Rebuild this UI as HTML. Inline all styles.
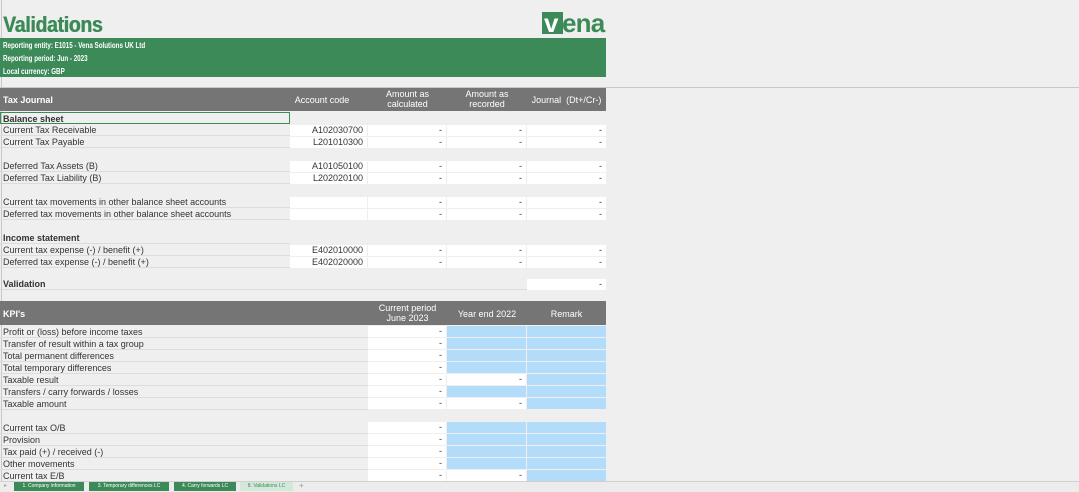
<!DOCTYPE html>
<html><head><meta charset="utf-8"><style>
*{margin:0;padding:0;box-sizing:border-box}
body{width:1079px;height:492px;background:#efefef;position:relative;overflow:hidden;font-family:"Liberation Sans",Arial,sans-serif;font-size:9px;color:#333}
.a{position:absolute}
.lbl{position:absolute;left:0;width:290px;height:12px;line-height:12px;padding-left:3px;border-bottom:1px solid #dcdcdc;white-space:nowrap}
.c{position:absolute;height:11px;background:#fff;line-height:11px;text-align:right;padding-right:4px;white-space:nowrap}
.b{background:#b3dcfb}
.hd{position:absolute;left:0;width:606px;background:#757575;color:#fff}
.hd div{position:absolute;text-align:center;line-height:10px}
.tab{position:absolute;top:482px;height:9px;background:#3c8a58;color:#fff;font-size:5px;line-height:9px;text-align:center;white-space:nowrap;overflow:hidden}
</style></head><body>
<div class="a" style="left:1px;top:0;width:1px;height:482px;background:#c8c8c8"></div>
<div class="a" style="left:3px;top:12px;font-size:22px;font-weight:bold;color:#3c8a58;letter-spacing:-0.3px;transform:scaleX(0.88);transform-origin:left;text-shadow:0.6px 0 0 #3c8a58">Validations</div>
<div class="a" style="left:542px;top:12px;width:21px;height:22px;background:#3c8a58"></div>
<div class="a" style="left:544px;top:10px;font-size:26px;font-weight:bold;color:#fff;line-height:26px">v</div>
<div class="a" style="left:562px;top:10px;font-size:26px;font-weight:bold;color:#3c8a58;line-height:26px;letter-spacing:-0.8px">ena</div>
<div class="a" style="left:0;top:38px;width:606px;height:39px;background:#3c8a58;color:#fff;font-size:8px;font-weight:bold;padding-left:3px;line-height:13px;padding-top:1px">
<div style="transform:scaleX(0.78);transform-origin:left">Reporting entity: E1015 - Vena Solutions UK Ltd</div>
<div style="transform:scaleX(0.78);transform-origin:left">Reporting period: Jun - 2023</div>
<div style="transform:scaleX(0.78);transform-origin:left">Local currency: GBP</div></div>
<div class="a" style="left:0;top:87px;width:1079px;height:1px;background:#c8c8c8"></div>
<div class="hd" style="top:88px;height:23px">
<div style="left:3px;top:7px;font-weight:bold;text-align:left">Tax Journal</div>
<div style="left:290px;width:64px;top:7px">Account code</div>
<div style="left:368px;width:79px;top:1px">Amount as<br>calculated</div>
<div style="left:447px;width:80px;top:1px">Amount as<br>recorded</div>
<div style="left:527px;width:79px;top:7px">Journal &nbsp;(Dt+/Cr-)</div>
</div>
<div class="lbl" style="top:112px;font-weight:bold;border:1px solid #3c8a58;padding-left:2px">Balance sheet</div>
<div class="lbl" style="top:124px">Current Tax Receivable</div>
<div class="lbl" style="top:136px">Current Tax Payable</div>
<div class="lbl" style="top:160px">Deferred Tax Assets (B)</div>
<div class="lbl" style="top:172px">Deferred Tax Liability (B)</div>
<div class="lbl" style="top:196px">Current tax movements in other balance sheet accounts</div>
<div class="lbl" style="top:208px">Deferred tax movements in other balance sheet accounts</div>
<div class="lbl" style="top:232px;font-weight:bold">Income statement</div>
<div class="lbl" style="top:244px">Current tax expense (-) / benefit (+)</div>
<div class="lbl" style="top:256px">Deferred tax expense (-) / benefit (+)</div>
<div class="lbl" style="top:278px;font-weight:bold;width:527px">Validation</div>

<div class="c" style="left:290px;width:77px;top:125px">A102030700</div><div class="c" style="left:368px;width:78px;top:125px">-</div><div class="c" style="left:447px;width:79px;top:125px">-</div><div class="c" style="left:527px;width:79px;top:125px">-</div>
<div class="c" style="left:290px;width:77px;top:137px">L201010300</div><div class="c" style="left:368px;width:78px;top:137px">-</div><div class="c" style="left:447px;width:79px;top:137px">-</div><div class="c" style="left:527px;width:79px;top:137px">-</div>
<div class="c" style="left:290px;width:77px;top:161px">A101050100</div><div class="c" style="left:368px;width:78px;top:161px">-</div><div class="c" style="left:447px;width:79px;top:161px">-</div><div class="c" style="left:527px;width:79px;top:161px">-</div>
<div class="c" style="left:290px;width:77px;top:173px">L202020100</div><div class="c" style="left:368px;width:78px;top:173px">-</div><div class="c" style="left:447px;width:79px;top:173px">-</div><div class="c" style="left:527px;width:79px;top:173px">-</div>
<div class="c" style="left:290px;width:77px;top:197px"></div><div class="c" style="left:368px;width:78px;top:197px">-</div><div class="c" style="left:447px;width:79px;top:197px">-</div><div class="c" style="left:527px;width:79px;top:197px">-</div>
<div class="c" style="left:290px;width:77px;top:209px"></div><div class="c" style="left:368px;width:78px;top:209px">-</div><div class="c" style="left:447px;width:79px;top:209px">-</div><div class="c" style="left:527px;width:79px;top:209px">-</div>
<div class="c" style="left:290px;width:77px;top:245px">E402010000</div><div class="c" style="left:368px;width:78px;top:245px">-</div><div class="c" style="left:447px;width:79px;top:245px">-</div><div class="c" style="left:527px;width:79px;top:245px">-</div>
<div class="c" style="left:290px;width:77px;top:257px">E402020000</div><div class="c" style="left:368px;width:78px;top:257px">-</div><div class="c" style="left:447px;width:79px;top:257px">-</div><div class="c" style="left:527px;width:79px;top:257px">-</div>
<div class="c" style="left:527px;width:79px;top:279px">-</div>

<div class="hd" style="top:301px;height:24px">
<div style="left:3px;top:8px;font-weight:bold;text-align:left">KPI's</div>
<div style="left:368px;width:79px;top:2px">Current period<br>June 2023</div>
<div style="left:447px;width:80px;top:8px">Year end 2022</div>
<div style="left:527px;width:79px;top:8px">Remark</div>
</div>
<div class="lbl" style="top:326px;width:368px">Profit or (loss) before income taxes</div>
<div class="lbl" style="top:338px;width:368px">Transfer of result within a tax group</div>
<div class="lbl" style="top:350px;width:368px">Total permanent differences</div>
<div class="lbl" style="top:362px;width:368px">Total temporary differences</div>
<div class="lbl" style="top:374px;width:368px">Taxable result</div>
<div class="lbl" style="top:386px;width:368px">Transfers / carry forwards / losses</div>
<div class="lbl" style="top:398px;width:368px">Taxable amount</div>
<div class="lbl" style="top:422px;width:368px">Current tax O/B</div>
<div class="lbl" style="top:434px;width:368px">Provision</div>
<div class="lbl" style="top:446px;width:368px">Tax paid (+) / received (-)</div>
<div class="lbl" style="top:458px;width:368px">Other movements</div>
<div class="lbl" style="top:470px;width:368px">Current tax E/B</div>

<div class="c" style="left:368px;width:78px;top:326px">-</div><div class="c b" style="left:447px;width:79px;top:326px"></div><div class="c b" style="left:527px;width:79px;top:326px"></div>
<div class="c" style="left:368px;width:78px;top:338px">-</div><div class="c b" style="left:447px;width:79px;top:338px"></div><div class="c b" style="left:527px;width:79px;top:338px"></div>
<div class="c" style="left:368px;width:78px;top:350px">-</div><div class="c b" style="left:447px;width:79px;top:350px"></div><div class="c b" style="left:527px;width:79px;top:350px"></div>
<div class="c" style="left:368px;width:78px;top:362px">-</div><div class="c b" style="left:447px;width:79px;top:362px"></div><div class="c b" style="left:527px;width:79px;top:362px"></div>
<div class="c" style="left:368px;width:78px;top:374px">-</div><div class="c" style="left:447px;width:79px;top:374px">-</div><div class="c b" style="left:527px;width:79px;top:374px"></div>
<div class="c" style="left:368px;width:78px;top:386px">-</div><div class="c b" style="left:447px;width:79px;top:386px"></div><div class="c b" style="left:527px;width:79px;top:386px"></div>
<div class="c" style="left:368px;width:78px;top:398px">-</div><div class="c" style="left:447px;width:79px;top:398px">-</div><div class="c b" style="left:527px;width:79px;top:398px"></div>
<div class="c" style="left:368px;width:78px;top:422px">-</div><div class="c b" style="left:447px;width:79px;top:422px"></div><div class="c b" style="left:527px;width:79px;top:422px"></div>
<div class="c" style="left:368px;width:78px;top:434px">-</div><div class="c b" style="left:447px;width:79px;top:434px"></div><div class="c b" style="left:527px;width:79px;top:434px"></div>
<div class="c" style="left:368px;width:78px;top:446px">-</div><div class="c b" style="left:447px;width:79px;top:446px"></div><div class="c b" style="left:527px;width:79px;top:446px"></div>
<div class="c" style="left:368px;width:78px;top:458px">-</div><div class="c b" style="left:447px;width:79px;top:458px"></div><div class="c b" style="left:527px;width:79px;top:458px"></div>
<div class="c" style="left:368px;width:78px;top:470px">-</div><div class="c" style="left:447px;width:79px;top:470px">-</div><div class="c b" style="left:527px;width:79px;top:470px"></div>

<div class="a" style="left:0;top:481px;width:1079px;height:11px;background:#ececec;border-top:1px solid #d0d0d0"></div>
<div class="a" style="left:4px;top:482px;font-size:6px;color:#aaa">&#9656;</div>
<div class="tab" style="left:14px;width:70px">1. Company information</div>
<div class="tab" style="left:89px;width:80px">3. Temporary differences LC</div>
<div class="tab" style="left:174px;width:62px">4. Carry forwards LC</div>
<div class="tab" style="left:240px;width:53px;background:#d4e8da;color:#3c8a58">8. Validations LC</div>
<div class="a" style="left:299px;top:481px;font-size:8px;color:#999">+</div>
</body></html>
